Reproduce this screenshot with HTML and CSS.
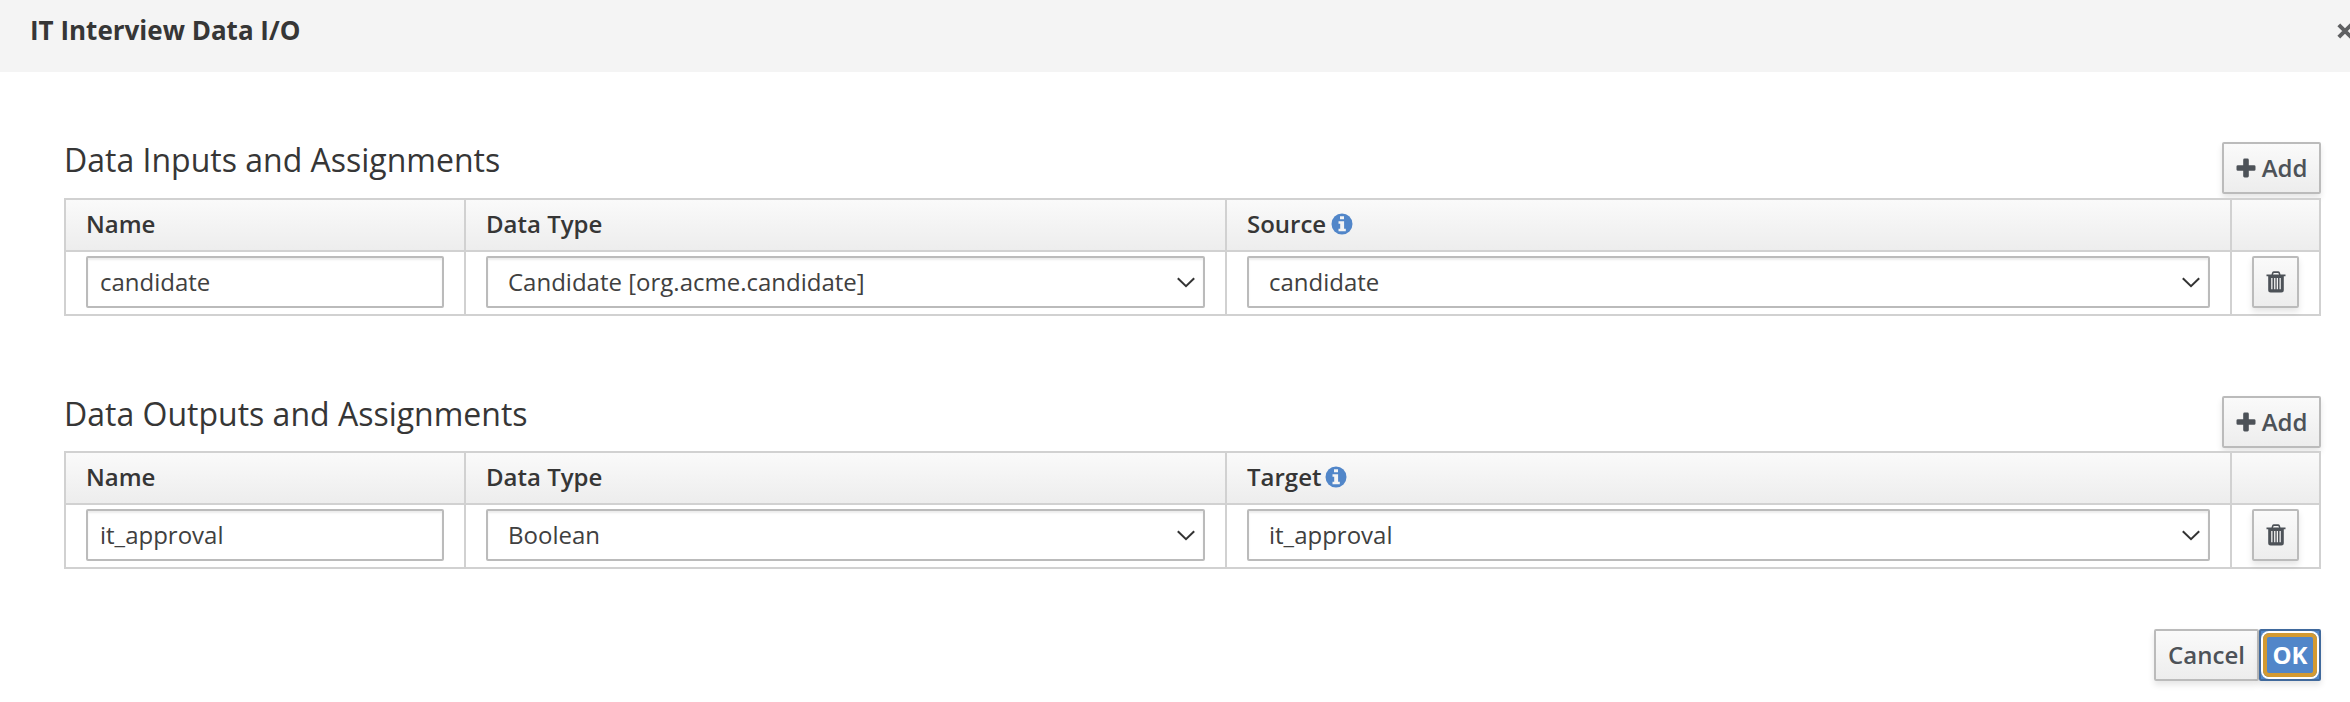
FILE: index.html
```
<!DOCTYPE html>
<html lang="en">
<head>
<meta charset="utf-8">
<title>IT Interview Data I/O</title>
<link rel="stylesheet" href="styles.css">
</head>
<body>
<svg class="sprite" aria-hidden="true">
  <symbol id="plus" viewBox="0 0 20 20"><path d="M8.600 0.500h2.800q1.400 0 1.400 1.400v5.300h5.300q1.400 0 1.400 1.400v2.800q0 1.400-1.400 1.400h-5.300v5.300q0 1.400-1.400 1.400h-2.800q-1.400 0-1.400-1.400v-5.300h-5.300q-1.400 0-1.400-1.400v-2.800q0-1.400 1.400-1.400h5.300v-5.300q0-1.400 1.400-1.400z"/></symbol>
  <symbol id="trash" viewBox="0 0 20 22"><path fill-rule="evenodd" d="M0.500 3.500h5L6.100 1.600Q6.600 0.300 8 0.300h4q1.400 0 1.900 1.300L14.500 3.500h5v1.800h-1.700v13.700q0 2.500-2.500 2.500H4.700q-2.500 0-2.500-2.500V5.300H0.500zM7 3.500h6l-0.500-1.200q-0.200-0.400-0.700-0.400H8.200q-0.500 0-0.700 0.400zM5.200 7v11.300h1.300V7zM8.100 7v11.300h1.300V7zM10.700 7v11.300h1.300V7zM13.500 7v11.300h1.300V7z"/></symbol>
  <symbol id="info" viewBox="0 0 22 22"><circle cx="11" cy="11" r="10.500"/><path fill="#f4f4f4" d="M9 3.200h4v3H9zM7.500 8.200h5.600v7.500h1.700v2.500H7.500v-2.500h1.700v-5H7.500z"/></symbol>
  <symbol id="chevron" viewBox="0 0 18 11"><path fill="none" stroke="#333" stroke-width="2" d="M0.800 1.200l8.200 8 8.200-8"/></symbol>
  <symbol id="close" viewBox="0 0 16 16"><path fill="none" stroke="#5f6062" stroke-width="4" d="M1.800 1.800l12.400 12.400M14.200 1.800L1.800 14.200"/></symbol>
</svg>
<header class="modal-header">
  <h1 class="modal-title">IT Interview Data I/O</h1>
  <svg class="close"><use href="#close"/></svg>
</header>
<main class="modal-body">
  <section class="panel inputs">
    <div class="panel-head">
      <h2 class="panel-title">Data Inputs and Assignments</h2>
      <button class="btn add"><svg class="plus"><use href="#plus"/></svg>Add</button>
    </div>
    <div class="grid">
      <div class="th">Name</div><div class="th">Data Type</div>
      <div class="th">Source<svg class="info"><use href="#info"/></svg></div><div class="th"></div>
      <div class="td"><div class="field">candidate</div></div>
      <div class="td"><div class="field select">Candidate [org.acme.candidate]<svg class="chevron"><use href="#chevron"/></svg></div></div>
      <div class="td"><div class="field select">candidate<svg class="chevron"><use href="#chevron"/></svg></div></div>
      <div class="td"><button class="btn delete"><svg class="trash"><use href="#trash"/></svg></button></div>
    </div>
  </section>
  <section class="panel outputs">
    <div class="panel-head">
      <h2 class="panel-title">Data Outputs and Assignments</h2>
      <button class="btn add"><svg class="plus"><use href="#plus"/></svg>Add</button>
    </div>
    <div class="grid">
      <div class="th">Name</div><div class="th">Data Type</div>
      <div class="th target">Target<svg class="info"><use href="#info"/></svg></div><div class="th"></div>
      <div class="td"><div class="field">it_approval</div></div>
      <div class="td"><div class="field select">Boolean<svg class="chevron"><use href="#chevron"/></svg></div></div>
      <div class="td"><div class="field select">it_approval<svg class="chevron"><use href="#chevron"/></svg></div></div>
      <div class="td"><button class="btn delete"><svg class="trash"><use href="#trash"/></svg></button></div>
    </div>
  </section>
  <footer class="modal-footer">
    <button class="btn cancel">Cancel</button>
    <button class="btn primary"><span class="focus-ring">OK</span></button>
  </footer>
</main>
</body>
</html>
```
FILE: styles.css
```
* { box-sizing: border-box; }
body {
  margin: 0;
  height: 702px;
  overflow: hidden;
  background: #fff;
  color: #363636;
  font: 24px/40px "Open Sans", sans-serif;
}
.sprite { display: none; }
svg { flex: none; }
.modal-header {
  display: flex;
  justify-content: space-between;
  height: 72px;
  padding: 10px 0 0 30px;
  background: #f4f4f4;
}
.modal-title { margin: 0; font-size: 26px; line-height: 40px; font-weight: 700; }
.close { width: 16px; height: 16px; margin: 13px -3px 0 0; }
.modal-body { padding: 70px 29px 0 64px; }
.panel-head { display: flex; justify-content: space-between; height: 56px; }
.outputs { margin-top: 80px; }
.outputs .panel-head { height: 55px; }
.panel-title { margin: 0; font-size: 32px; line-height: 36px; font-weight: 400; }
.btn {
  display: flex;
  align-items: center;
  justify-content: center;
  height: 52px;
  padding: 0;
  border: 2px solid #bbb;
  border-radius: 2px;
  background: linear-gradient(#fafafa, #ededed);
  box-shadow: 0 4px 6px rgba(3, 3, 3, .1);
  color: #4d5258;
  font: 600 24px/40px "Open Sans", sans-serif;
}
.add { width: 99px; gap: 6px; }
.plus { width: 20px; height: 20px; fill: currentColor; }
.grid {
  display: grid;
  grid-template-columns: 400px 761px 1005px 91px;
  grid-template-rows: 52px 66px;
}
.th, .td { border: solid #d1d1d1; border-width: 2px 0 0 2px; }
.th:nth-child(4n), .td:nth-child(4n) { border-right-width: 2px; }
.th {
  display: flex;
  align-items: center;
  padding: 0 20px 2px;
  background: linear-gradient(#fafafa, #ededed);
  font-weight: 600;
}
.td { border-bottom-width: 2px; padding: 4px 20px 0; }
.info { width: 22px; height: 22px; margin-left: 5px; fill: #5186c9; }
.target .info { margin-left: 4px; }
.field {
  display: flex;
  align-items: center;
  height: 52px;
  padding: 0 12px;
  border: 2px solid #bbb;
  border-radius: 2px;
  background: #fff;
  box-shadow: inset 0 2px 2px rgba(3, 3, 3, .075);
  color: #404040;
}
.select { justify-content: space-between; padding: 0 8px 0 20px; }
.chevron { width: 18px; height: 11px; }
.delete { width: 47px; }
.trash { width: 20px; height: 22px; fill: currentColor; }
.modal-footer { display: flex; justify-content: flex-end; margin-top: 60px; }
.cancel { width: 105px; }
.primary { width: 62px; border-color: #40699c; background: #5186c9; color: #fff; }
.focus-ring {
  width: 54px;
  height: 44px;
  border: 4px solid #d39a33;
  border-radius: 6px;
  box-shadow: 0 0 0 2px #fff;
  font-weight: 700;
  line-height: 36px;
}
```
